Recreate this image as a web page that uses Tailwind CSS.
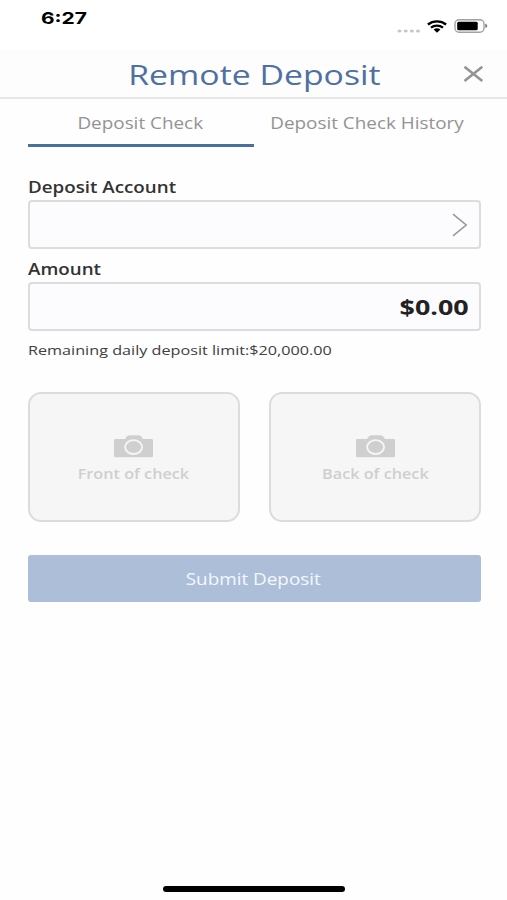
<!DOCTYPE html>
<html lang="en">
<head>
<meta charset="utf-8">
<title>Remote Deposit</title>
<script src="https://cdn.jsdelivr.net/npm/@tailwindcss/browser@4"></script>
</head>
<body class="bg-white">
<div class="w-[507px] h-[900px] bg-[#fefefe] flex flex-col overflow-hidden font-['Open_Sans',sans-serif] whitespace-nowrap">
  <div class="h-[50px] shrink-0 bg-white flex justify-between pl-[41px] pr-[19px]">
    <span class="mt-[7px] h-[22px] leading-[22px] text-[16.5px] font-bold text-black font-['Inter',sans-serif] origin-left scale-x-[1.27]">6:27</span>
    <div class="flex items-center h-[52px] gap-[7px]">
      <svg class="mt-[9px]" width="24" height="4" viewBox="-1.500 0 24 4" fill="#c6c6c6"><ellipse cx="2" cy="2" rx="2" ry="1.6"/><ellipse cx="8.2" cy="2" rx="2" ry="1.6"/><ellipse cx="14.4" cy="2" rx="2" ry="1.6"/><ellipse cx="20.500" cy="2" rx="2" ry="1.6"/></svg>
      <svg width="20" height="13" viewBox="0 0 20 13" fill="none" stroke="#000" stroke-width="2.4"><path d="M.9 4.5C6 .3 14 .3 19.100 4.500"/><path d="M4 7.600C7.400 4.900 12.600 4.900 16 7.600"/><path d="M6.600 9.400Q10 7.300 13.400 9.400L10 12.700Z" fill="#000" stroke="none"/></svg>
      <svg width="34" height="14" viewBox="0 0 34 14"><rect x="1" y=".7" width="29" height="12.600" rx="4" fill="#fff" stroke="#a2a2a2" stroke-width="1.400"/><rect x="3.200" y="2.700" width="20.500" height="8.600" rx="1.500" fill="#000"/><path d="M31.300 4.800Q33.300 5.400 33.300 6.900T31.300 9Z" fill="#777"/></svg>
    </div>
  </div>
  <header class="h-[49px] shrink-0 relative flex items-center justify-center pl-[1px] bg-[#fdfdfd] border-b-2 border-[#e6e6e6]">
    <h1 class="text-[27.7px] leading-[48px] text-[#4e70a2] origin-center scale-x-[1.22]">Remote Deposit</h1>
    <svg class="absolute left-[463px] top-[15px]" width="21" height="18" viewBox="0 0 21 18" fill="none" stroke="#949494" stroke-width="2.600"><path d="M1.500 1.800L19.300 16M19.300 1.800L1.500 16"/></svg>
  </header>
  <nav class="h-[48px] shrink-0 flex px-[28px] text-[16px] text-[#939393]">
    <div class="w-[226px] flex justify-center pr-[1px] border-b-[3px] border-[#4b70a0]"><span class="leading-[49px] h-[45px] scale-x-[1.18]">Deposit Check</span></div>
    <div class="w-[226px] flex justify-center pl-[2px]"><span class="leading-[49px] h-[45px] scale-x-[1.18]">Deposit Check History</span></div>
  </nav>
  <main class="px-[28px] pt-[29px] flex flex-col">
    <label class="h-[24px] leading-[23px] text-[15.5px] font-semibold text-[#333] origin-left scale-x-[1.21] self-start">Deposit Account</label>
    <div class="w-[453px] h-[49px] border-2 border-[#dcdcdc] rounded-[4px] bg-[#fcfcfe] flex items-center justify-end pr-[11px]">
      <svg width="16" height="24" viewBox="0 0 16 24" fill="none" stroke="#999" stroke-width="1.600"><path d="M1 1.200L14.200 12L1 22.800"/></svg>
    </div>
    <label class="mt-[9px] h-[24px] leading-[23px] text-[15.5px] font-semibold text-[#333] origin-left scale-x-[1.21] self-start">Amount</label>
    <div class="w-[453px] h-[49px] border-2 border-[#dcdcdc] rounded-[4px] bg-[#fcfcfe] flex items-center justify-end pr-[10px]">
      <span class="text-[22px] font-bold text-[#222] origin-right scale-x-[1.22]">$0.00</span>
    </div>
    <p class="mt-[9px] h-[20px] leading-[20px] text-[13.5px] text-[#404040] origin-left scale-x-[1.2] self-start">Remaining daily deposit limit:$20,000.00</p>
    <div class="mt-[32px] w-[453px] flex justify-between">
      <div class="w-[212px] h-[130px] rounded-[13px] border-2 border-[#dcdcdc] bg-[#f6f6f6] flex flex-col items-center pt-[41px] pr-[1px] text-[#cfcfcf]">
        <svg width="39" height="23" viewBox="0 0 39 23"><path d="M1.500 4H11L13 1.300Q14 .3 16 .3H24Q26 .3 27 1.300L29 4H37.500Q39 4 39 5.200V21Q39 22.200 37.500 22.200H1.500Q0 22.200 0 21V5.200Q0 4 1.500 4Z" fill="currentColor"/><ellipse cx="19.600" cy="12.100" rx="8.500" ry="6.900" fill="none" stroke="#f6f6f6" stroke-width="1.800"/></svg>
        <span class="mt-[6px] leading-[20px] text-[13.5px] font-semibold scale-x-[1.2]">Front of check</span>
      </div>
      <div class="w-[212px] h-[130px] rounded-[13px] border-2 border-[#dcdcdc] bg-[#f6f6f6] flex flex-col items-center pt-[41px] text-[#cfcfcf]">
        <svg width="39" height="23" viewBox="0 0 39 23"><path d="M1.500 4H11L13 1.300Q14 .3 16 .3H24Q26 .3 27 1.300L29 4H37.500Q39 4 39 5.200V21Q39 22.200 37.500 22.200H1.500Q0 22.200 0 21V5.200Q0 4 1.500 4Z" fill="currentColor"/><ellipse cx="19.600" cy="12.100" rx="8.500" ry="6.900" fill="none" stroke="#f6f6f6" stroke-width="1.800"/></svg>
        <span class="mt-[6px] leading-[20px] text-[13.5px] font-semibold scale-x-[1.2]">Back of check</span>
      </div>
    </div>
    <button class="mt-[33px] w-[453px] h-[47px] rounded-[3px] bg-[#adbed8] text-[#f3f8ff] text-[16px] flex items-center justify-center pr-[2px]"><span class="scale-x-[1.18]">Submit Deposit</span></button>
  </main>
  <div class="mt-auto mb-[8px] ml-[163px] w-[182px] h-[6px] rounded-full bg-black"></div>
</div>
</body>
</html>
